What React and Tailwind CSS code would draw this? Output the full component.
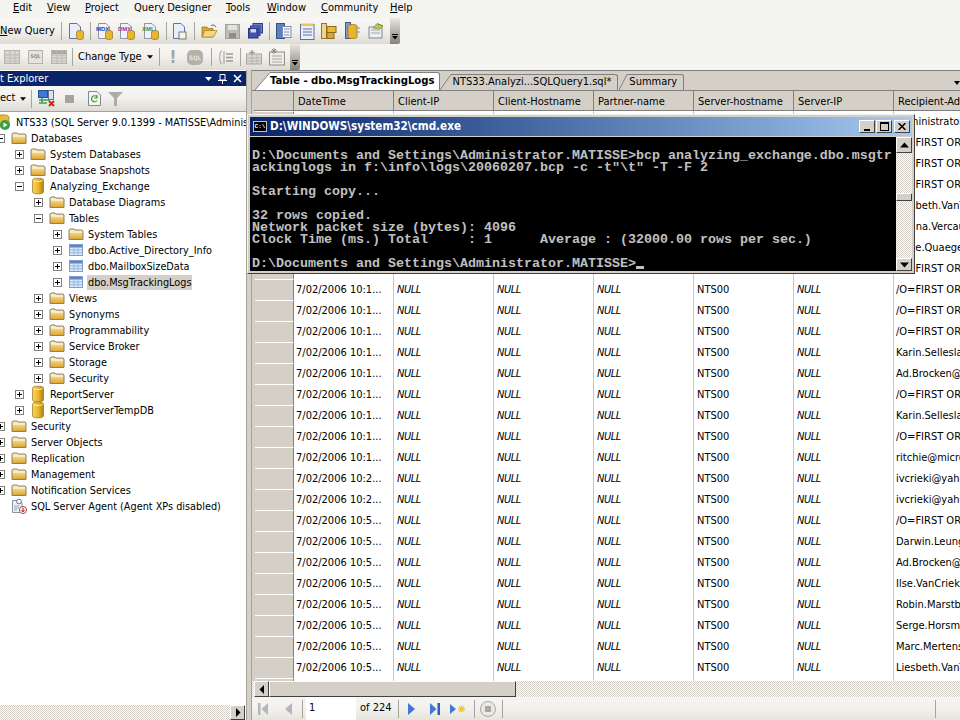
const uiFont = "font-['DejaVu_Sans_Condensed','Noto_Sans',sans-serif]";

const levelMargin = {
  0: "ml-[-4px]",
  1: "ml-[-4px]",
  2: "ml-[15px]",
  3: "ml-[34px]",
  4: "ml-[53px]",
};

const tree = [
  { level: 0, icon: "server", label: "NTS33 (SQL Server 9.0.1399 - MATISSE\\Administrator)" },
  { level: 1, exp: "-", icon: "folder", label: "Databases" },
  { level: 2, exp: "+", icon: "folder", label: "System Databases" },
  { level: 2, exp: "+", icon: "folder", label: "Database Snapshots" },
  { level: 2, exp: "-", icon: "db", label: "Analyzing_Exchange" },
  { level: 3, exp: "+", icon: "folder", label: "Database Diagrams" },
  { level: 3, exp: "-", icon: "folder", label: "Tables" },
  { level: 4, exp: "+", icon: "folder", label: "System Tables" },
  { level: 4, exp: "+", icon: "table", label: "dbo.Active_Directory_Info" },
  { level: 4, exp: "+", icon: "table", label: "dbo.MailboxSizeData" },
  { level: 4, exp: "+", icon: "table", label: "dbo.MsgTrackingLogs", selected: true },
  { level: 3, exp: "+", icon: "folder", label: "Views" },
  { level: 3, exp: "+", icon: "folder", label: "Synonyms" },
  { level: 3, exp: "+", icon: "folder", label: "Programmability" },
  { level: 3, exp: "+", icon: "folder", label: "Service Broker" },
  { level: 3, exp: "+", icon: "folder", label: "Storage" },
  { level: 3, exp: "+", icon: "folder", label: "Security" },
  { level: 2, exp: "+", icon: "db", label: "ReportServer" },
  { level: 2, exp: "+", icon: "db", label: "ReportServerTempDB" },
  { level: 1, exp: "+", icon: "folder", label: "Security" },
  { level: 1, exp: "+", icon: "folder", label: "Server Objects" },
  { level: 1, exp: "+", icon: "folder", label: "Replication" },
  { level: 1, exp: "+", icon: "folder", label: "Management" },
  { level: 1, exp: "+", icon: "folder", label: "Notification Services" },
  { level: 1, icon: "agent", label: "SQL Server Agent (Agent XPs disabled)" },
];

const columns = ["DateTime", "Client-IP", "Client-Hostname", "Partner-name", "Server-hostname", "Server-IP", "Recipient-Address"];

const FO = "/O=FIRST ORGANIZATION";
const rows = [
  ["10:1", "Administrator"], ["10:1", FO], ["10:1", FO], ["10:1", FO],
  ["10:1", "Liesbeth.VanTuyl"], ["10:1", "Ariana.Vercauteren"], ["10:1", "Anne.Quaegebeur"], ["10:1", FO],
  ["10:1", FO], ["10:1", FO], ["10:1", FO], ["10:1", "Karin.Selleslagh"],
  ["10:1", "Ad.Brocken@first"], ["10:1", FO], ["10:1", "Karin.Selleslagh"], ["10:1", FO],
  ["10:1", "ritchie@microsoft"], ["10:2", "ivcrieki@yahoo"], ["10:2", "ivcrieki@yahoo"], ["10:5", FO],
  ["10:5", "Darwin.Leung"], ["10:5", "Ad.Brocken@first"], ["10:5", "Ilse.VanCrieking"], ["10:5", "Robin.Marstboom"],
  ["10:5", "Serge.Horsman"], ["10:5", "Marc.Mertens@first"], ["10:5", "Liesbeth.VanTuyl"],
];

const terminal = [
  "",
  "D:\\Documents and Settings\\Administrator.MATISSE>bcp analyzing_exchange.dbo.msgtr",
  "ackinglogs in f:\\info\\logs\\20060207.bcp -c -t\"\\t\" -T -F 2",
  "",
  "Starting copy...",
  "",
  "32 rows copied.",
  "Network packet size (bytes): 4096",
  "Clock Time (ms.) Total     : 1      Average : (32000.00 rows per sec.)",
  "",
];

function Folder() {
  return (
    <svg width="16" height="14" viewBox="0 0 16 14" className="shrink-0">
      <defs>
        <linearGradient id="fold" x1="0" y1="0" x2="0" y2="1">
          <stop offset="0" stopColor="#fdf3c4" />
          <stop offset="1" stopColor="#dca32c" />
        </linearGradient>
      </defs>
      <path d="M1 3 L2 2 H6 L7 3 H14 L15 4 V12.5 H1 Z" fill="url(#fold)" stroke="#8a8064" strokeWidth="1" />
      <path d="M2 5 H14" stroke="#fffbe6" strokeWidth="1" />
    </svg>
  );
}

function Cylinder({ w = 12, h = 18 }) {
  return (
    <svg width={w} height={h} viewBox="0 0 12 18" className="shrink-0">
      <defs>
        <linearGradient id="cyl" x1="0" y1="0" x2="1" y2="0">
          <stop offset="0" stopColor="#f7d35a" />
          <stop offset="0.5" stopColor="#ecba2f" />
          <stop offset="1" stopColor="#b07d10" />
        </linearGradient>
      </defs>
      <path d="M0.5 3 C0.5 0.5 11.5 0.5 11.5 3 V15 C11.5 17.5 0.5 17.5 0.5 15 Z" fill="url(#cyl)" stroke="#9a7a20" strokeWidth="0.7" />
      <path d="M1 3 C2 5 10 5 11 3" stroke="#fff3b0" fill="none" />
    </svg>
  );
}

function TableIcon() {
  return (
    <svg width="14" height="12" viewBox="0 0 14 12" className="shrink-0">
      <rect x="0.5" y="0.5" width="13" height="11" fill="#dfe8f6" stroke="#7f9dcf" />
      <rect x="1" y="1" width="12" height="2.5" fill="#5f86c8" />
      <path d="M1 6 H13 M1 8.7 H13 M5 3.5 V11 M9 3.5 V11" stroke="#9db5dd" />
    </svg>
  );
}

function ServerIcon() {
  return (
    <svg width="16" height="16" viewBox="0 0 16 16" className="shrink-0">
      <path d="M1 3 C1 0 13 0 13 3 V13 H1 Z" fill="#e9b93a" stroke="#9a7a20" strokeWidth="0.6" />
      <circle cx="9" cy="11" r="5" fill="#34a04a" />
      <path d="M7.5 8.5 L11.5 11 L7.5 13.5 Z" fill="#fff" />
    </svg>
  );
}

function AgentIcon() {
  return (
    <svg width="16" height="16" viewBox="0 0 16 16" className="shrink-0">
      <path d="M1.5 2.5 H9 L11 5 V14.5 H1.5 Z" fill="#eef1f7" stroke="#8a93a8" />
      <path d="M3 8 H8 M3 10 H8 M3 12 H6" stroke="#9aa5bc" />
      <circle cx="8" cy="3.5" r="2.4" fill="#fff" stroke="#6a7288" />
      <circle cx="12" cy="12" r="3.6" fill="#f7f4f2" stroke="#b05050" />
      <path d="M12 9.8 V13 M10.5 12 L12 14 L13.5 12" stroke="#c0201a" fill="none" />
    </svg>
  );
}

function Expander({ sign }) {
  return (
    <span className="relative block h-[9px] w-[9px] shrink-0 border border-[#808080] bg-white">
      <span className="absolute left-[1px] top-[3px] h-[1px] w-[5px] bg-black" />
      {sign === "+" && <span className="absolute left-[3px] top-[1px] h-[5px] w-[1px] bg-black" />}
    </span>
  );
}

function TreeRow({ item }) {
  const icons = {
    folder: <Folder />,
    db: <span className="mx-[2px] flex"><Cylinder /></span>,
    table: <span className="mx-[1px] flex"><TableIcon /></span>,
    server: <ServerIcon />,
    agent: <AgentIcon />,
  };
  return (
    <div className={`flex h-[16px] items-center whitespace-nowrap ${levelMargin[item.level]}`}>
      {item.level > 0 && (item.exp ? <Expander sign={item.exp} /> : <span className="w-[9px] shrink-0" />)}
      <span className={`flex w-[16px] justify-center ${item.level > 0 ? "ml-[6px]" : ""}`}>{icons[item.icon]}</span>
      <span className={`ml-[3px] px-[1px] leading-[15px] ${item.selected ? "bg-[#d4d0c8]" : ""}`}>{item.label}</span>
    </div>
  );
}

function Sep({ h = "h-[18px]", className = "" }) {
  return <span className={`w-[1px] shrink-0 bg-[#a8a69c] ${h} ${className}`} />;
}

function Doc({ tint = "#e8eefa", children, className = "" }) {
  return (
    <svg width="16" height="17" viewBox="0 0 16 17" className={`shrink-0 ${className}`}>
      <path d="M1.5 0.5 H9 L12.5 4 V15.5 H1.5 Z" fill={tint} stroke="#5d73a6" />
      {children}
    </svg>
  );
}

function DbBadge() {
  return (
    <g>
      <path d="M8.5 9 C8.5 7 15.5 7 15.5 9 V15 C15.5 17 8.5 17 8.5 15 Z" fill="#e8b52c" stroke="#8d6a16" strokeWidth="0.6" />
    </g>
  );
}

function Badge({ color, label }) {
  return (
    <svg width="18" height="17" viewBox="0 0 18 17" className="shrink-0">
      <path d="M2.5 0.5 H10 L13.5 4 V15.5 H2.5 Z" fill="#f0f2f8" stroke="#8d94a8" />
      <text x="0" y="8" fontSize="6" fontWeight="700" fontFamily="'Liberation Sans',sans-serif" fill={color}>{label}</text>
      <path d="M9.5 9 C9.5 7 16.5 7 16.5 9 V15 C16.5 17 9.5 17 9.5 15 Z" fill="#e8b52c" stroke="#8d6a16" strokeWidth="0.6" />
    </svg>
  );
}

function OpenFolder() {
  return (
    <svg width="17" height="15" viewBox="0 0 17 15" className="shrink-0">
      <path d="M1 3 H6 L7 4.5 H12 V13 H1 Z" fill="#d9a63a" stroke="#8d6a16" strokeWidth="0.7" />
      <path d="M1 13 L4 6.5 H16 L12.5 13 Z" fill="#f4d67c" stroke="#a07c20" strokeWidth="0.7" />
      <path d="M10 1.5 C12 0.5 14 1 15 3" stroke="#3f66b0" fill="none" />
    </svg>
  );
}

function SaveIcon() {
  return (
    <svg width="15" height="15" viewBox="0 0 15 15" className="shrink-0">
      <rect x="0.5" y="0.5" width="14" height="14" fill="#bdbdb6" stroke="#a3a39c" />
      <rect x="3" y="1" width="9" height="5" fill="#e3e3dd" />
      <rect x="4" y="9" width="7" height="5" fill="#8e8e88" />
    </svg>
  );
}

function SaveAllIcon() {
  return (
    <svg width="15" height="16" viewBox="0 0 15 16" className="shrink-0">
      <rect x="5" y="0.5" width="9.5" height="9.5" fill="#6c7fcb" stroke="#2f3f8f" />
      <rect x="2.5" y="3" width="9.5" height="9.5" fill="#5668bb" stroke="#2f3f8f" />
      <rect x="0.5" y="5.5" width="9.5" height="9.5" fill="#4254a8" stroke="#26337d" />
      <rect x="2.5" y="6" width="5.5" height="3.5" fill="#ced6f2" />
    </svg>
  );
}

function PanelIcon({ kind }) {
  if (kind === "props") {
    return (
      <svg width="16" height="17" viewBox="0 0 16 17" className="shrink-0">
        <rect x="0.5" y="0.5" width="8" height="15" fill="#5d80bf" stroke="#33508c" />
        <rect x="6.5" y="3.5" width="8.5" height="11" fill="#f6f7fb" stroke="#7c8cb0" />
        <path d="M8 6 H13.5 M8 9 H13.5 M8 12 H13.5" stroke="#7c8cb0" />
      </svg>
    );
  }
  if (kind === "note") {
    return (
      <svg width="15" height="17" viewBox="0 0 15 17" className="shrink-0">
        <rect x="0.5" y="1.5" width="13.5" height="15" fill="#e9eefa" stroke="#5d73a6" />
        <rect x="1" y="0.5" width="12.5" height="2.5" fill="#eec455" />
        <path d="M3 6 H12 M3 9 H12 M3 12 H12" stroke="#5d73a6" />
      </svg>
    );
  }
  if (kind === "tree") {
    return (
      <svg width="16" height="17" viewBox="0 0 16 17" className="shrink-0">
        <rect x="0.5" y="0.5" width="5" height="15" fill="#f1d48a" stroke="#8d7a3a" />
        <rect x="6" y="3.5" width="9" height="6" fill="#e9b93a" stroke="#8d6a16" />
        <rect x="6" y="9.5" width="7" height="6" fill="#d9a63a" stroke="#8d6a16" />
      </svg>
    );
  }
  if (kind === "dbtree") {
    return (
      <svg width="16" height="18" viewBox="0 0 16 18" className="shrink-0">
        <rect x="0.5" y="0.5" width="5" height="16" fill="#7f9ad0" stroke="#3f5a92" />
        <path d="M3 4 C3 2 12 2 12 4 V15 C12 17 3 17 3 15 Z" fill="#e8b52c" stroke="#8d6a16" strokeWidth="0.7" />
        <path d="M11 6 H15 M11 10 H15" stroke="#7c8cb0" />
      </svg>
    );
  }
  return (
    <svg width="16" height="16" viewBox="0 0 16 16" className="shrink-0">
      <rect x="1" y="4" width="13" height="11" fill="#eceef2" stroke="#808890" />
      <path d="M3 7 H12 M3 10 H12" stroke="#a0a8b0" />
      <path d="M5 5 L9 0.5 L15 3 L12 6 Z" fill="#d8b84a" stroke="#7a8f3a" strokeWidth="0.7" />
      <path d="M10 1 L15 3" stroke="#4c9a4c" />
    </svg>
  );
}

function Grip() {
  return (
    <span className="ml-[3px] flex h-full w-[10px] shrink-0 flex-col items-center justify-end gap-[1px] rounded-r-[2px] bg-linear-to-b from-[#e8e6de] to-[#85837a] pb-[4px]">
      <span className="h-[1px] w-[6px] bg-black" />
      <svg width="6" height="4" viewBox="0 0 6 4"><path d="M0 0 H6 L3 3.5 Z" fill="#000" /></svg>
    </span>
  );
}

function GreyGrid({ header }) {
  return (
    <svg width="16" height="14" viewBox="0 0 16 14" className="shrink-0">
      <rect x="0.5" y="0.5" width="15" height="13" fill="#d8d7d0" stroke="#b6b5ac" />
      {header && <rect x="1" y="1" width="14" height="3" fill="#a9a89f" />}
      <path d="M1 5 H15 M1 8 H15 M1 11 H15 M6 1 V13 M11 1 V13" stroke="#bdbcb3" />
    </svg>
  );
}

function Toolbars() {
  return (
    <div className="shrink-0 bg-[#f4f4f1]">
      <div className="flex h-[15px] items-center pl-[13px] text-[11px] leading-[15px] text-black">
        <span className="w-[34px]"><u>E</u>dit</span>
        <span className="w-[38px]"><u>V</u>iew</span>
        <span className="w-[49px]"><u>P</u>roject</span>
        <span className="w-[92px]">Quer<u>y</u> Designer</span>
        <span className="w-[41px]"><u>T</u>ools</span>
        <span className="w-[54px]"><u>W</u>indow</span>
        <span className="w-[69px]"><u>C</u>ommunity</span>
        <span><u>H</u>elp</span>
      </div>

      <div className="mt-[3px] flex h-[26px] w-[400px] items-center bg-linear-to-b from-[#f8f7f4] via-[#f1f0ec] to-[#dddbd2] text-[11px]">
        <span className="w-[61px] shrink-0 whitespace-nowrap"><u>N</u>ew Query</span>
        <Sep />
        <Doc className="ml-[6px]"><DbBadge /></Doc>
        <Sep className="ml-[6px]" />
        <span className="ml-[5px] flex"><Badge color="#1f3fb0" label="MDX" /></span>
        <span className="ml-[4px] flex"><Badge color="#a02fa0" label="DMX" /></span>
        <span className="ml-[6px] flex"><Badge color="#2f8f4f" label="XML" /></span>
        <Sep className="ml-[6px]" />
        <Doc className="ml-[5px]"><rect x="7" y="9" width="7" height="7" fill="#f3f3ee" stroke="#7d7d70" /></Doc>
        <Sep className="ml-[6px]" />
        <span className="ml-[6px] flex"><OpenFolder /></span>
        <span className="ml-[7px] flex"><SaveIcon /></span>
        <span className="ml-[8px] flex"><SaveAllIcon /></span>
        <Sep className="ml-[6px]" />
        <span className="ml-[6px] flex"><PanelIcon kind="props" /></span>
        <span className="ml-[8px] flex"><PanelIcon kind="note" /></span>
        <span className="ml-[6px] flex"><PanelIcon kind="tree" /></span>
        <span className="ml-[8px] flex"><PanelIcon kind="dbtree" /></span>
        <span className="ml-[7px] flex"><PanelIcon kind="wizard" /></span>
        <span className="ml-[-1px] flex h-full grow justify-end"><Grip /></span>
      </div>

      <div className="flex h-[26px] w-[300px] items-center bg-linear-to-b from-[#f8f7f4] via-[#f1f0ec] to-[#dddbd2] text-[11px]">
        <span className="ml-[4px] flex"><GreyGrid /></span>
        <span className="ml-[8px] flex h-[14px] w-[15px] items-center justify-center border border-[#b6b5ac] bg-[#e4e3dc] text-[5px] font-bold text-[#8c8b83]">SQL</span>
        <span className="ml-[8px] flex"><GreyGrid header /></span>
        <Sep className="ml-[5px]" />
        <span className="ml-[5px] w-[66px] shrink-0 whitespace-nowrap">Change Ty<u>p</u>e</span>
        <svg width="6" height="4" viewBox="0 0 7 4" className="ml-[3px] shrink-0"><path d="M0 0 H7 L3.5 4 Z" fill="#000" /></svg>
        <Sep className="ml-[6px]" />
        <span className="ml-[9px] w-[8px] text-center text-[17px] font-bold leading-[17px] text-[#a5a49c]">!</span>
        <span className="ml-[10px] flex h-[15px] w-[16px] items-center justify-center rounded-[5px] bg-[#b3b2aa] text-[6px] font-bold text-[#e6e5de]">SQL</span>
        <Sep className="ml-[8px]" />
        <svg width="16" height="15" viewBox="0 0 16 15" className="ml-[6px] shrink-0">
          <path d="M4 1 C1 1 3 7 1 7.5 C3 8 1 14 4 14 M6 1 V14" stroke="#9c9b93" fill="none" />
          <path d="M8 4 H15 M8 7.5 H15 M8 11 H15" stroke="#9c9b93" strokeWidth="1.4" />
        </svg>
        <Sep className="ml-[6px]" />
        <span className="ml-[5px] flex"><svg width="16" height="15" viewBox="0 0 16 15" className="shrink-0"><rect x="0.5" y="4" width="15" height="10" fill="#d8d7d0" stroke="#a9a89f" /><path d="M6 0 V5 M3.5 2.5 H8.5" stroke="#9c9b93" strokeWidth="1.4" /><path d="M1 8 H15 M1 11 H15 M6 5 V14 M11 5 V14" stroke="#b6b5ac" /></svg></span>
        <span className="ml-[7px] flex"><svg width="16" height="18" viewBox="0 0 16 18" className="shrink-0"><rect x="0.5" y="4" width="15" height="13" fill="#eeede7" stroke="#8f8e86" /><path d="M3 8 H13 M3 11 H13 M3 14 H13" stroke="#a5a49c" /><path d="M5 0 V6 M2 3 H8 M3 1 L7 5 M7 1 L3 5" stroke="#8f8e86" /></svg></span>
        <span className="ml-[-1px] flex h-full grow justify-end"><Grip /></span>
      </div>
    </div>
  );
}

function ObjectExplorer() {
  return (
    <div className="flex w-[246px] shrink-0 flex-col bg-white">
      <div className="mt-[1px] flex h-[15px] items-center justify-between bg-[#0a246a] pr-[4px] text-[11px] text-white">
        <span className="whitespace-nowrap pt-[1px]">t Explorer</span>
        <span className="flex items-center gap-[6px]">
          <svg width="7" height="4" viewBox="0 0 7 4"><path d="M0 0 H7 L3.5 4 Z" fill="#fff" /></svg>
          <svg width="9" height="10" viewBox="0 0 9 10"><path d="M2 0.5 H7 V6 H2 Z M0 6.5 H9 M4.5 6.5 V10" stroke="#fff" fill="none" /></svg>
          <svg width="9" height="9" viewBox="0 0 9 9"><path d="M1 1 L8 8 M8 1 L1 8" stroke="#fff" strokeWidth="1.6" /></svg>
        </span>
      </div>
      <div className="flex h-[26px] shrink-0 items-center border-b border-[#a5a297] bg-linear-to-b from-[#f8f7f4] via-[#f1f0ec] to-[#dddbd2] text-[11px]">
        <span className="w-[18px] whitespace-nowrap">ect</span>
        <svg width="6" height="4" viewBox="0 0 7 4" className="ml-[2px] shrink-0"><path d="M0 0 H7 L3.5 4 Z" fill="#000" /></svg>
        <Sep className="ml-[5px]" />
        <svg width="18" height="17" viewBox="0 0 18 17" className="ml-[6px] shrink-0">
          <rect x="0.5" y="0.5" width="9" height="7" fill="#3f78d8" stroke="#284e94" />
          <rect x="10.5" y="0.5" width="5" height="9" fill="#dbe3f0" stroke="#68748c" />
          <path d="M1 10 H12 M4 8 V13 M1 13 H9" stroke="#3c9a5a" strokeWidth="1.4" />
          <path d="M11 11 L16 16 M16 11 L11 16" stroke="#d8201a" strokeWidth="2" />
        </svg>
        <span className="ml-[9px] h-[8px] w-[9px] bg-[#a6a59d]" />
        <svg width="13" height="15" viewBox="0 0 13 15" className="ml-[14px] shrink-0">
          <path d="M0.5 0.5 H9 L12.5 4 V14.5 H0.5 Z" fill="#f6f7ea" stroke="#7f8a98" />
          <path d="M9 6 A3 3 0 1 0 9 9.5 M9 4 V7 H6" stroke="#3a9a40" fill="none" strokeWidth="1.2" />
        </svg>
        <svg width="15" height="14" viewBox="0 0 15 14" className="ml-[7px] shrink-0"><path d="M0 0 H15 L9 6 V14 H6 V6 Z" fill="#aeada5" /></svg>
      </div>
      <div className="min-h-0 flex-1 overflow-hidden pt-[2px] text-[10.8px] leading-[16px] text-black">
        {tree.map((item, i) => <TreeRow key={i} item={item} />)}
      </div>
      <div className="flex h-[15px] shrink-0">
        <div className="w-[230px] bg-[repeating-conic-gradient(#d4d0c8_0_25%,#fff_0_50%)] bg-[length:2px_2px]" />
        <ScrollButton dir="right" />
      </div>
    </div>
  );
}

function ScrollButton({ dir, className = "" }) {
  const arrows = {
    left: "M5 0 V9 L0.5 4.5 Z",
    right: "M1 0 V9 L5.5 4.5 Z",
    up: "M0 6 H9 L4.5 1 Z",
    down: "M0 2 H9 L4.5 7 Z",
  };
  return (
    <span className={`flex h-full w-[15px] shrink-0 items-center justify-center border border-t-white border-l-white border-r-[#404040] border-b-[#404040] bg-[#d4d0c8] ${className}`}>
      <svg width={dir === "left" || dir === "right" ? 6 : 9} height="9" viewBox={dir === "left" || dir === "right" ? "0 0 6 9" : "0 0 9 8"}>
        <path d={arrows[dir]} fill="#000" />
      </svg>
    </span>
  );
}

function Tab({ active, slant, className = "", children }) {
  return (
    <div className={`flex items-stretch ${className}`}>
      <svg width={slant} height={active ? 18 : 16} viewBox={`0 0 ${slant} ${active ? 18 : 16}`} className="block shrink-0">
        <path d={`M0 ${active ? 18 : 16} L${slant} 0.5 V${active ? 18 : 16} Z`} fill={active ? "#fff" : "#d4d0c8"} />
        <path d={`M0 ${active ? 18 : 16} L${slant} 0.5`} stroke="#808080" fill="none" />
      </svg>
      <div className={`flex items-center whitespace-nowrap rounded-tr-[3px] border-t border-r border-[#808080] pr-[4px] ${active ? "bg-white text-[11.25px] font-bold" : "bg-[#d4d0c8] text-[11px]"}`}>
        {children}
      </div>
    </div>
  );
}

function DataGrid() {
  return (
    <div className="flex min-w-0 flex-1 flex-col bg-[#d4d0c8]">
      <div className="relative flex h-[20px] shrink-0 items-end border-t border-[#808080] pl-[3px] text-black">
        <Tab active slant={15} className="h-[18px]">Table - dbo.MsgTrackingLogs</Tab>
        <Tab slant={11} className="ml-[-1px] h-[16px] pl-[1px]"><span className="px-[2px]">NTS33.Analyzi...SQLQuery1.sql*</span></Tab>
        <Tab slant={8} className="ml-[1px] h-[16px]"><span className="px-[2px]">Summary</span></Tab>
        <svg width="6" height="4" viewBox="0 0 6 4" className="absolute right-[0px] top-[10px]"><path d="M0 0 H6 L3 4 Z" fill="#000" /></svg>
      </div>
      <div className="min-h-0 flex-1 overflow-hidden border-t border-[#808080] pl-[2px] text-[11px]">
        <div className="grid h-[20px] grid-cols-[40px_repeat(6,100px)_200px] bg-[#d4d0c8]">
          <div className="border-r border-b border-r-[#808080] border-b-[#808080]" />
          {columns.map((c) => (
            <div key={c} className="overflow-hidden whitespace-nowrap border-r border-b border-r-[#808080] border-b-[#808080] pl-[4px] leading-[21px]">{c}</div>
          ))}
        </div>
        {[...rows, ["10:5", ""]].map((r, i) => (
          <div key={i} className="grid h-[21px] grid-cols-[40px_repeat(6,100px)_200px] leading-[22px] [&>*:not(:first-child)]:bg-white">
            <div className="ml-[1px] border-t border-r border-b border-t-white border-r-[#808080] border-b-[#808080] bg-[#d4d0c8]" />
            <div className="overflow-hidden whitespace-nowrap border-r border-b border-[#c6c6c6] pl-[2px]">7/02/2006 {r[0]}...</div>
            <div className="border-r border-b border-[#c6c6c6] pl-[3px] italic tracking-[-0.5px]">NULL</div>
            <div className="border-r border-b border-[#c6c6c6] pl-[3px] italic tracking-[-0.5px]">NULL</div>
            <div className="border-r border-b border-[#c6c6c6] pl-[3px] italic tracking-[-0.5px]">NULL</div>
            <div className="border-r border-b border-[#c6c6c6] pl-[3px]">NTS00</div>
            <div className="border-r border-b border-[#c6c6c6] pl-[3px] italic tracking-[-0.5px]">NULL</div>
            <div className="overflow-hidden whitespace-nowrap border-b border-[#c6c6c6] pl-[2px]">{r[1]}</div>
          </div>
        ))}
      </div>
      <div className="flex h-[16px] shrink-0 bg-[repeating-conic-gradient(#d4d0c8_0_25%,#fff_0_50%)] bg-[length:2px_2px] pl-[2px]">
        <ScrollButton dir="left" />
        <span className="h-full w-[247px] border border-t-white border-l-white border-r-[#404040] border-b-[#404040] bg-[#d4d0c8]" />
      </div>
      <div className="flex h-[23px] shrink-0 items-center bg-linear-to-b from-[#f6f5f2] via-[#f2f1ed] to-[#e6e4dc] pl-[6px] text-[11px]">
        <svg width="10" height="12" viewBox="0 0 10 12" className="shrink-0"><path d="M0 0 H2.5 V12 H0 Z M10 0 V12 L3.5 6 Z" fill="#b3b6bb" /></svg>
        <svg width="7" height="12" viewBox="0 0 7 12" className="ml-[17px] shrink-0"><path d="M7 0 V12 L0 6 Z" fill="#b3b6bb" /></svg>
        <Sep className="ml-[10px]" />
        <span className="ml-[3px] flex h-full w-[50px] items-center bg-white pl-[3px]">1</span>
        <span className="ml-[4px] w-[38px] shrink-0 whitespace-nowrap">of 224</span>
        <Sep />
        <svg width="7" height="12" viewBox="0 0 7 12" className="ml-[9px] shrink-0"><path d="M0 0 V12 L7 6 Z" fill="#3f78d8" /></svg>
        <svg width="10" height="12" viewBox="0 0 10 12" className="ml-[15px] shrink-0"><path d="M0 0 V12 L6.5 6 Z" fill="#3f78d8" /><path d="M7.5 0 H10 V12 H7.5 Z" fill="#2f5fb8" /></svg>
        <svg width="16" height="12" viewBox="0 0 16 12" className="ml-[10px] shrink-0"><path d="M0 1 V11 L6 6 Z" fill="#3f78d8" /><path d="M11.5 2.5 V9.5 M8 6 H15 M9 3.5 L14 8.5 M14 3.5 L9 8.5" stroke="#f0c83c" strokeWidth="1.3" /></svg>
        <Sep className="ml-[8px]" />
        <span className="ml-[5px] flex h-[16px] w-[16px] items-center justify-center rounded-full border border-[#a9a89f] bg-[#e9e8e2]"><span className="h-[6px] w-[6px] bg-[#aaa9a1]" /></span>
        <Sep className="ml-[6px]" />
        <Sep className="ml-[432px]" />
      </div>
    </div>
  );
}

function CmdButton({ children, className = "" }) {
  return (
    <span className={`flex h-[13px] w-[16px] items-center justify-center border border-t-white border-l-white border-r-[#404040] border-b-[#404040] bg-[#d4d0c8] ${className}`}>
      {children}
    </span>
  );
}

function CmdWindow() {
  return (
    <div className="absolute left-[247px] top-[114px] flex h-[160px] w-[668px] flex-col border border-t-[#f0f0f0] border-l-[#f0f0f0] border-r-[#404040] border-b-[#404040] bg-[#d4d0c8] p-[2px]">
      <div className="flex h-[19px] shrink-0 items-center bg-linear-to-r from-[#0a246a] to-[#a6caf0] pl-[3px] pr-[2px]">
        <span className="flex h-[11px] w-[14px] shrink-0 items-center justify-center border border-[#c0c0c0] bg-black font-['Liberation_Mono',monospace] text-[6px] font-bold leading-none text-white">C:\</span>
        <span className="ml-[3px] whitespace-nowrap text-[11.6px] font-bold text-white">D:\WINDOWS\system32\cmd.exe</span>
        <span className="ml-auto flex items-center">
          <CmdButton className="items-end pb-[1px]"><span className="h-[2px] w-[6px] bg-black" /></CmdButton>
          <CmdButton className="ml-[1px]"><span className="h-[9px] w-[9px] border border-t-2 border-black" /></CmdButton>
          <CmdButton className="ml-[2px]">
            <svg width="8" height="7" viewBox="0 0 8 7"><path d="M0.5 0 L7.5 7 M7.5 0 L0.5 7" stroke="#000" strokeWidth="1.5" /></svg>
          </CmdButton>
        </span>
      </div>
      <div className="mt-[1px] flex min-h-0 flex-1">
        <div className="flex-1 overflow-hidden bg-black pl-[2px] pt-[1px] font-['Liberation_Mono',monospace] text-[13.33px] font-bold leading-[12px] text-[#c0c0c0]">
          {terminal.map((line, i) => <div key={i} className="h-[12px] whitespace-pre">{line}</div>)}
          <div className="flex h-[12px] whitespace-pre">D:\Documents and Settings\Administrator.MATISSE&gt;<span className="mt-[8px] h-[3px] w-[8px] bg-[#c0c0c0]" /></div>
        </div>
        <div className="flex w-[16px] shrink-0 flex-col bg-[repeating-conic-gradient(#d4d0c8_0_25%,#fff_0_50%)] bg-[length:2px_2px]">
          <ScrollButton dir="up" className="h-[16px]! w-full!" />
          <span className="mt-[40px] h-[8px] border border-t-white border-l-white border-r-[#404040] border-b-[#404040] bg-[#d4d0c8]" />
          <ScrollButton dir="down" className="mt-auto h-[13px]! w-full!" />
        </div>
      </div>
    </div>
  );
}

export default function App() {
  return (
    <div className={`relative flex h-[720px] w-[960px] flex-col overflow-hidden bg-[#f4f4f1] text-black ${uiFont}`}>
      <Toolbars />
      <div className="flex min-h-0 flex-1">
        <ObjectExplorer />
        <div className="flex w-[6px] shrink-0 justify-between border-x border-[#a5a297] bg-[#d4d0c8]" />
        <DataGrid />
      </div>
      <CmdWindow />
    </div>
  );
}
